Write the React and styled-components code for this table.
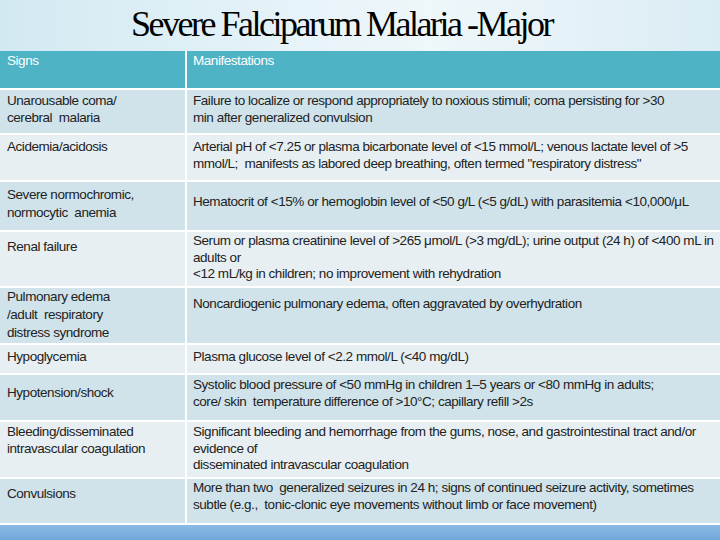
import React from "react";
import styled, { createGlobalStyle } from "styled-components";

const Global = createGlobalStyle`
  html, body { margin: 0; padding: 0; }
  body { width: 720px; height: 540px; overflow: hidden; background: #ffffff; }
`;

const Page = styled.div`
  width: 720px;
  height: 540px;
  display: flex;
  flex-direction: column;
  background: linear-gradient(90deg, #d3e9f2 0%, #e8f4f9 45%, #eef7fa 60%, #dbecf4 100%);
  font-family: "Liberation Sans", Arial, sans-serif;
`;

const TitleBar = styled.header`
  height: 51px;
  display: flex;
  align-items: flex-end;
  justify-content: center;
  padding-right: 37px;
  box-sizing: border-box;
`;

const Title = styled.h1`
  margin: 0 0 9px 0;
  font-family: "Liberation Serif", "Times New Roman", serif;
  font-weight: normal;
  font-size: 36px;
  line-height: 36px;
  letter-spacing: -2.5px;
  color: #000;
  white-space: pre;
`;

const Table = styled.div`
  display: grid;
  grid-template-columns: 185px 1fr;
  grid-template-rows: 37px 43px 45px 48px 54px 55px 28px 45px 55px 44px;
  gap: 2px;
  background: #ffffff;
  padding-bottom: 2px;
`;

const tones = {
  head: "#4fb3c6",
  dark: "#d0e3ea",
  light: "#e7eff2",
};

const Cell = styled.div`
  background: ${(p) => tones[p.$tone]};
  color: ${(p) => (p.$tone === "head" ? "#ffffff" : "#222222")};
  padding: ${(p) => p.$top}px 4px 0 ${(p) => (p.$right ? 6 : 7)}px;
  font-size: 13.5px;
  line-height: ${(p) => p.$lh || 16.5}px;
  letter-spacing: -0.45px;
  white-space: pre;
  overflow: hidden;
  box-sizing: border-box;
`;

const BottomBar = styled.div`
  flex: 1;
  background: linear-gradient(180deg, #8bbbe4 0%, #72a7da 100%);
`;

const rows = [
  {
    tone: "dark",
    sign: "Unarousable coma/\ncerebral  malaria",
    st: 3,
    man: "Failure to localize or respond appropriately to noxious stimuli; coma persisting for >30\nmin after generalized convulsion",
    mt: 3,
  },
  {
    tone: "light",
    sign: "Acidemia/acidosis",
    st: 4,
    man: "Arterial pH of <7.25 or plasma bicarbonate level of <15 mmol/L; venous lactate level of >5\nmmol/L;  manifests as labored deep breathing, often termed \"respiratory distress\"",
    mt: 4,
  },
  {
    tone: "dark",
    sign: "Severe normochromic,\nnormocytic  anemia",
    st: 4,
    slh: 18,
    man: "Hematocrit of <15% or hemoglobin level of <50 g/L (<5 g/dL) with parasitemia <10,000/\u03bcL",
    mt: 12,
  },
  {
    tone: "light",
    sign: "Renal failure",
    st: 7,
    man: "Serum or plasma creatinine level of >265 \u03bcmol/L (>3 mg/dL); urine output (24 h) of <400 mL in\nadults or\n<12 mL/kg in children; no improvement with rehydration",
    mt: 1,
  },
  {
    tone: "dark",
    sign: "Pulmonary edema\n/adult  respiratory\ndistress syndrome",
    st: 0,
    slh: 18,
    man: "Noncardiogenic pulmonary edema, often aggravated by overhydration",
    mt: 8,
  },
  {
    tone: "light",
    sign: "Hypoglycemia",
    st: 4,
    man: "Plasma glucose level of <2.2 mmol/L (<40 mg/dL)",
    mt: 4,
  },
  {
    tone: "dark",
    sign: "Hypotension/shock",
    st: 10,
    man: "Systolic blood pressure of <50 mmHg in children 1\u20135 years or <80 mmHg in adults;\ncore/ skin  temperature difference of >10\u00b0C; capillary refill >2s",
    mt: 2,
  },
  {
    tone: "light",
    sign: "Bleeding/disseminated\nintravascular coagulation",
    st: 2,
    man: "Significant bleeding and hemorrhage from the gums, nose, and gastrointestinal tract and/or\nevidence of\ndisseminated intravascular coagulation",
    mt: 2,
  },
  {
    tone: "dark",
    sign: "Convulsions",
    st: 7,
    man: "More than two  generalized seizures in 24 h; signs of continued seizure activity, sometimes\nsubtle (e.g.,  tonic-clonic eye movements without limb or face movement)",
    mt: 1,
  },
];

export default function App() {
  return (
    <>
      <Global />
      <Page>
        <TitleBar>
          <Title>Severe Falciparum Malaria -Major</Title>
        </TitleBar>
        <Table>
          <Cell $tone="head" $top={2}>Signs</Cell>
          <Cell $tone="head" $top={2} $right>Manifestations</Cell>
          {rows.map((r, i) => (
            <React.Fragment key={i}>
              <Cell $tone={r.tone} $top={r.st} $lh={r.slh}>{r.sign}</Cell>
              <Cell $tone={r.tone} $top={r.mt} $right>{r.man}</Cell>
            </React.Fragment>
          ))}
        </Table>
        <BottomBar />
      </Page>
    </>
  );
}
